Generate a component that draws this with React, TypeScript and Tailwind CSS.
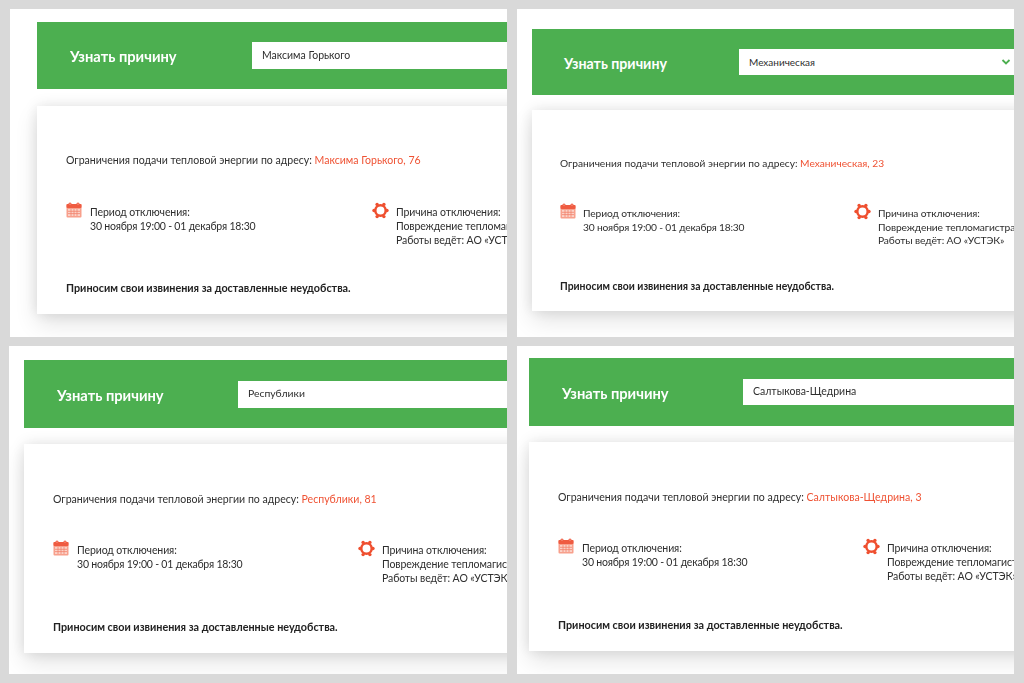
import React from 'react';

interface PanelData {
  street: string;
  house: string;
  chevron?: boolean;
  frame: string;
  bar: string;
  title: string;
  input: string;
  inputText: string;
  card: string;
  heading: string;
  row: string;
  firstCol: string;
  text: string;
  apology: string;
}

const panels: PanelData[] = [
  {
    street: 'Максима Горького',
    house: '76',
    frame: 'ml-px pt-[13px] pl-[27px]',
    bar: 'h-[67px] pl-[33px]',
    title: 'w-[182px] pt-[2px] text-[14.7px]',
    input: 'h-[27px] w-[300px] pl-[10px]',
    inputText: 'text-[10.5px]',
    card: 'mt-[17px] h-[208px] pt-[47px] pl-[29px]',
    heading: 'text-[10.55px]',
    row: 'mt-[35px]',
    firstCol: 'w-[306px] gap-[8px]',
    text: 'pt-[3px] text-[10.5px] leading-[14px] tracking-[-0.1px]',
    apology: 'mt-[34px] text-[10.8px]',
  },
  {
    street: 'Механическая',
    house: '23',
    chevron: true,
    frame: 'pt-[20px] pl-[15px]',
    bar: 'h-[66px] pl-[32px]',
    title: 'w-[175px] pt-[4px] text-[14.2px]',
    input: 'h-[26px] w-[275px] pl-[10px] pr-[3px]',
    inputText: 'text-[10px]',
    card: 'mt-[15px] h-[201px] pt-[46px] pl-[28px]',
    heading: 'text-[10.2px]',
    row: 'mt-[33px]',
    firstCol: 'w-[294px] gap-[7px]',
    text: 'pt-[4px] text-[10.25px] leading-[13.5px] tracking-[-0.12px]',
    apology: 'mt-[31px] text-[10.4px]',
  },
  {
    street: 'Республики',
    house: '81',
    frame: 'pt-[14px] pl-[15px]',
    bar: 'h-[68px] pl-[33px]',
    title: 'w-[181px] pt-[3px] text-[14.7px]',
    input: 'h-[27px] w-[300px] pl-[10px]',
    inputText: 'text-[10.4px]',
    card: 'mt-[16px] h-[209px] pt-[48px] pl-[29px]',
    heading: 'text-[10.55px]',
    row: 'mt-[34px]',
    firstCol: 'w-[305px] gap-[8px]',
    text: 'pt-[3px] text-[10.5px] leading-[14px] tracking-[-0.1px]',
    apology: 'mt-[35px] text-[10.8px]',
  },
  {
    street: 'Салтыкова-Щедрина',
    house: '3',
    frame: 'pt-[12px] pl-[12px]',
    bar: 'h-[68px] pl-[33px]',
    title: 'w-[181px] pt-[2px] text-[14.7px]',
    input: 'h-[26px] w-[300px] pl-[10px]',
    inputText: 'text-[10.5px]',
    card: 'mt-[16px] h-[209px] pt-[48px] pl-[29px]',
    heading: 'text-[10.55px]',
    row: 'mt-[34px]',
    firstCol: 'w-[305px] gap-[8px]',
    text: 'pt-[3px] text-[10.5px] leading-[14px] tracking-[-0.1px]',
    apology: 'mt-[35px] text-[10.8px]',
  },
];

const CalendarIcon = () => (
  <svg width="16" height="16" viewBox="0 0 16 16" className="shrink-0">
    <rect x="0.5" y="2" width="15" height="13.5" rx="1" fill="#f8a08c" />
    <rect x="0.5" y="2" width="15" height="4" rx="1" fill="#ef5b41" />
    <circle cx="4" cy="2" r="1.6" fill="#ef5b41" />
    <circle cx="12" cy="2" r="1.6" fill="#ef5b41" />
    <circle cx="4" cy="2" r="0.6" fill="#fbd2c8" />
    <circle cx="12" cy="2" r="0.6" fill="#fbd2c8" />
    <rect x="2" y="7" width="12" height="7" fill="#fbd2c8" />
    <path d="M2 9.3h12M2 11.6h12M5 7v7M8 7v7M11 7v7" stroke="#f2836d" strokeWidth="0.8" />
  </svg>
);

// ring with six knobs, two on top, two below, one on each side
const GearIcon = () => (
  <svg width="17" height="17" viewBox="0 0 17 17" className="shrink-0">
    <circle cx="8.5" cy="8.5" r="5.2" fill="none" stroke="#ef4f2f" strokeWidth="2.5" />
    <circle cx="15" cy="8.5" r="1.7" fill="#ef4f2f" />
    <circle cx="2" cy="8.5" r="1.7" fill="#ef4f2f" />
    <circle cx="11.9" cy="2.4" r="1.7" fill="#ef4f2f" />
    <circle cx="5.1" cy="2.4" r="1.7" fill="#ef4f2f" />
    <circle cx="11.9" cy="14.6" r="1.7" fill="#ef4f2f" />
    <circle cx="5.1" cy="14.6" r="1.7" fill="#ef4f2f" />
  </svg>
);

const Panel: React.FC<{ data: PanelData }> = ({ data }) => (
  <div className={`h-[328px] overflow-hidden bg-white ${data.frame}`}>
    <div className="w-[520px] blur-[0.35px]">
      <div className={`flex items-center bg-[#4caf50] ${data.bar}`}>
        <div className={`shrink-0 font-bold text-white ${data.title}`}>Узнать причину</div>
        <div className={`flex shrink-0 items-center justify-between bg-white ${data.input}`}>
          <span className={`text-[#2e2e2e] ${data.inputText}`}>{data.street}</span>
          {data.chevron && (
            <svg width="10" height="8" viewBox="0 0 10 8" fill="none">
              <path d="M1.5 2l3.5 3.5L8.5 2" stroke="#4caf50" strokeWidth="1.8" />
            </svg>
          )}
        </div>
      </div>
      <div className={`bg-white shadow-[0_10px_22px_rgba(0,0,0,0.11),0_0_14px_rgba(0,0,0,0.11)] ${data.card}`}>
        <p className={`leading-[14px] text-[#2e2e2e] ${data.heading}`}>
          Ограничения подачи тепловой энергии по адресу:{' '}
          <span className="text-[#ef5233]">
            {data.street}, {data.house}
          </span>
        </p>
        <div className={`flex text-[#2e2e2e] ${data.row}`}>
          <div className={`flex shrink-0 ${data.firstCol}`}>
            <CalendarIcon />
            <div className={data.text}>
              <div>Период отключения:</div>
              <div className="tracking-[-0.2px]">30 ноября 19:00 - 01 декабря 18:30</div>
            </div>
          </div>
          <div className="flex shrink-0 gap-[7px]">
            <GearIcon />
            <div className={`whitespace-nowrap ${data.text}`}>
              <div>Причина отключения:</div>
              <div>Повреждение тепломагистрали</div>
              <div>Работы ведёт: АО «УСТЭК»</div>
            </div>
          </div>
        </div>
        <p className={`font-bold leading-[14px] text-[#222222] ${data.apology}`}>
          Приносим свои извинения за доставленные неудобства.
        </p>
      </div>
    </div>
  </div>
);

export default function App() {
  return (
    <div className="h-[683px] w-[1024px] overflow-hidden bg-[#d9d9d9] pl-[9px] pt-[9px] font-['Lato',sans-serif]">
      <div className="grid grid-cols-[498px_497px] gap-x-[10px] gap-y-[9px]">
        {panels.map(panel => (
          <Panel key={panel.street} data={panel} />
        ))}
      </div>
    </div>
  );
}
